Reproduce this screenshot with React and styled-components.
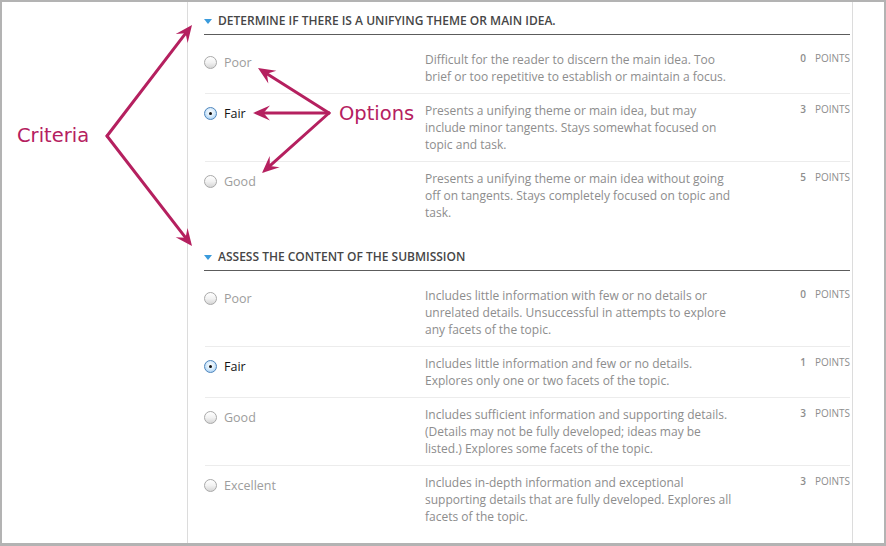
import React from "react";
import styled, { createGlobalStyle } from "styled-components";

const Global = createGlobalStyle`
  html, body { margin: 0; padding: 0; background: #fff; }
  * { box-sizing: border-box; }
`;

const ACCENT = "#b5205f";

const Page = styled.div`
  position: relative;
  width: 886px;
  height: 546px;
  overflow: hidden;
`;

const Frame = styled.div`
  display: flex;
  width: 100%;
  height: 100%;
  border: 2px solid #b3b3b3;
  border-bottom-width: 3px;
  background: #fff;
`;

const Gutter = styled.div`
  flex: 0 0 186px;
  border-right: 1px solid #dcdcdc;
`;

const Panel = styled.div`
  flex: 0 0 665px;
  padding: 10px 2px 0 16px;
  border-right: 1px solid #dcdcdc;
  font-family: "Open Sans", "Liberation Sans", sans-serif;
  overflow: hidden;
`;

const Rest = styled.div`
  flex: 1;
`;

const Section = styled.section`
  & + & { margin-top: 19px; }
`;

const Header = styled.div`
  display: flex;
  align-items: center;
  gap: 6px;
  padding-bottom: 5px;
  border-bottom: 1px solid #5c5c5c;
  margin-bottom: 8px;
  line-height: 17px;
  font-size: 12px;
  font-weight: 600;
  color: #464646;
  text-transform: uppercase;
`;

const Caret = styled.span`
  width: 0;
  height: 0;
  border-left: 4.5px solid transparent;
  border-right: 4.5px solid transparent;
  border-top: 5px solid #3a9bdc;
  margin-top: 1px;
`;

const Row = styled.div`
  display: flex;
  padding: 8px 0;
  margin-left: 1px;
  border-bottom: ${(p) => (p.$last ? "none" : "1px solid #ececec")};
`;

const LabelCell = styled.label`
  flex: 0 0 220px;
  display: flex;
  align-items: center;
  gap: 7px;
  height: 17px;
  margin-top: 3px;
  font-size: 12.5px;
  color: ${(p) => (p.$checked ? "#141414" : "#9d9d9d")};
`;

const Radio = styled.span`
  position: relative;
  flex: 0 0 13px;
  width: 13px;
  height: 13px;
  border-radius: 50%;
  margin-left: -1px;
  border: 1px solid ${(p) => (p.$checked ? "#4f86bd" : "#a9a9a9")};
  background: ${(p) =>
    p.$checked
      ? "radial-gradient(circle at 50% 40%, #ffffff 0%, #d9ecfb 45%, #8fc1ee 100%)"
      : "linear-gradient(#ffffff, #f2f2f2 50%, #d6d6d6)"};
  &::after {
    content: "";
    display: ${(p) => (p.$checked ? "block" : "none")};
    position: absolute;
    left: 4px;
    top: 4px;
    width: 3px;
    height: 3px;
    border-radius: 50%;
    background: #111;
  }
`;

const Desc = styled.div`
  flex: 0 0 312px;
  font-size: 12px;
  line-height: 17px;
  color: #8d8d8d;
`;

const Points = styled.div`
  flex: 1;
  display: flex;
  justify-content: flex-end;
  gap: 9px;
  padding-right: 0;
  font-size: 10px;
  line-height: 17px;
  margin-top: -1px;
  color: #8d8d8d;
  text-transform: uppercase;
`;

const Num = styled.span`
  font-weight: 600;
`;

const Overlay = styled.div`
  position: absolute;
  inset: 0;
  pointer-events: none;
`;

const Note = styled.span`
  position: absolute;
  left: ${(p) => p.$x}px;
  top: ${(p) => p.$y}px;
  font-family: "DejaVu Sans", Verdana, sans-serif;
  font-size: 19.5px;
  line-height: 24px;
  color: ${ACCENT};
`;

const Svg = styled.svg`
  position: absolute;
  inset: 0;
`;

const rubric = [
  {
    title: "Determine if there is a unifying theme or main idea.",
    options: [
      { label: "Poor", points: 0, desc: "Difficult for the reader to discern the main idea. Too brief or too repetitive to establish or maintain a focus." },
      { label: "Fair", points: 3, checked: true, desc: "Presents a unifying theme or main idea, but may include minor tangents. Stays somewhat focused on topic and task." },
      { label: "Good", points: 5, desc: "Presents a unifying theme or main idea without going off on tangents. Stays completely focused on topic and task." },
    ],
  },
  {
    title: "Assess the content of the submission",
    options: [
      { label: "Poor", points: 0, desc: "Includes little information with few or no details or unrelated details. Unsuccessful in attempts to explore any facets of the topic." },
      { label: "Fair", points: 1, checked: true, desc: "Includes little information and few or no details. Explores only one or two facets of the topic." },
      { label: "Good", points: 3, desc: "Includes sufficient information and supporting details. (Details may not be fully developed; ideas may be listed.) Explores some facets of the topic." },
      { label: "Excellent", points: 3, desc: "Includes in-depth information and exceptional supporting details that are fully developed. Explores all facets of the topic." },
    ],
  },
];

function Arrow({ from, to }) {
  const [x1, y1] = from;
  const [x2, y2] = to;
  const dx = x2 - x1;
  const dy = y2 - y1;
  const len = Math.hypot(dx, dy);
  const ux = dx / len;
  const uy = dy / len;
  const nx = -uy;
  const ny = ux;
  const L = 17;
  const W = 7.5;
  const notch = L * 0.62;
  const pts = [
    [x2, y2],
    [x2 - ux * L + nx * W, y2 - uy * L + ny * W],
    [x2 - ux * notch, y2 - uy * notch],
    [x2 - ux * L - nx * W, y2 - uy * L - ny * W],
  ];
  return (
    <g>
      <line
        x1={x1}
        y1={y1}
        x2={x2 - ux * notch}
        y2={y2 - uy * notch}
        stroke={ACCENT}
        strokeWidth="3"
        strokeLinecap="round"
      />
      <polygon points={pts.map((p) => p.join(",")).join(" ")} fill={ACCENT} />
    </g>
  );
}

export default function App() {
  return (
    <>
      <Global />
      <Page>
        <Frame>
          <Gutter />
          <Panel>
            {rubric.map((c) => (
              <Section key={c.title}>
                <Header>
                  <Caret />
                  <span>{c.title}</span>
                </Header>
                {c.options.map((o, i) => (
                  <Row key={o.label} $last={i === c.options.length - 1}>
                    <LabelCell $checked={o.checked}>
                      <Radio $checked={o.checked} />
                      {o.label}
                    </LabelCell>
                    <Desc>{o.desc}</Desc>
                    <Points>
                      <Num>{o.points}</Num>
                      <span>Points</span>
                    </Points>
                  </Row>
                ))}
              </Section>
            ))}
          </Panel>
          <Rest />
        </Frame>
        <Overlay>
          <Svg width="886" height="546" viewBox="0 0 886 546">
            <Arrow from={[107, 136]} to={[192, 25]} />
            <Arrow from={[107, 136]} to={[192, 246]} />
            <Arrow from={[329, 113]} to={[258, 68]} />
            <Arrow from={[329, 113]} to={[253, 113]} />
            <Arrow from={[329, 113]} to={[262, 173]} />
          </Svg>
          <Note $x={17} $y={124}>Criteria</Note>
          <Note $x={339} $y={102}>Options</Note>
        </Overlay>
      </Page>
    </>
  );
}
